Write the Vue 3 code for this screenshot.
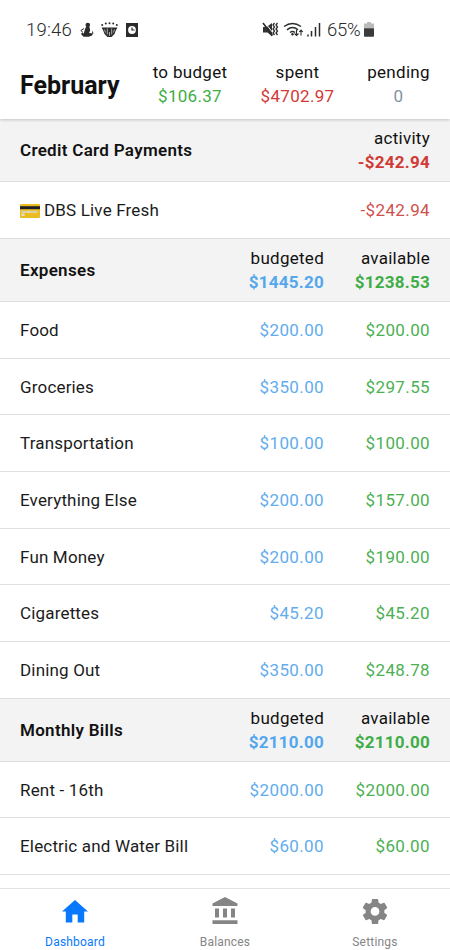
<script setup>
const totals = [
  { label: 'to budget', value: '$106.37', tone: 'green' },
  { label: 'spent', value: '$4702.97', tone: 'red' },
  { label: 'pending', value: '0', tone: 'slate' },
]
const sections = [
  {
    name: 'Credit Card Payments', available: '-$242.94', label: 'activity', tone: 'red',
    rows: [{ name: 'DBS Live Fresh', available: '-$242.94', card: true }],
  },
  {
    name: 'Expenses', budgeted: '$1445.20', available: '$1238.53', label: 'available', tone: 'green',
    rows: [
      { name: 'Food', budgeted: '$200.00', available: '$200.00' },
      { name: 'Groceries', budgeted: '$350.00', available: '$297.55' },
      { name: 'Transportation', budgeted: '$100.00', available: '$100.00' },
      { name: 'Everything Else', budgeted: '$200.00', available: '$157.00' },
      { name: 'Fun Money', budgeted: '$200.00', available: '$190.00' },
      { name: 'Cigarettes', budgeted: '$45.20', available: '$45.20' },
      { name: 'Dining Out', budgeted: '$350.00', available: '$248.78' },
    ],
  },
  {
    name: 'Monthly Bills', budgeted: '$2110.00', available: '$2110.00', label: 'available', tone: 'green',
    rows: [
      { name: 'Rent - 16th', budgeted: '$2000.00', available: '$2000.00' },
      { name: 'Electric and Water Bill', budgeted: '$60.00', available: '$60.00' },
    ],
  },
]
const tabs = [
  { name: 'Dashboard', active: true, box: '0 0 26 30', path: 'M13 4 26 15.5h-3.8V26.5h-6.5v-8h-5.4v8H3.8v-11H0z' },
  { name: 'Balances', box: '0 0 26 30', path: 'M13 1 25.5 7.5V10H.5V7.5zM3 12.5h4v9H3zM11 12.5h4v9h-4zM19 12.5h4v9h-4zM.5 24.3h25V28H.5z' },
  { name: 'Settings', box: '1.6 -.35 20.8 24', path: 'M19.43 12.98c.04-.32.07-.64.07-.98s-.03-.66-.07-.98l2.11-1.65c.19-.15.24-.42.12-.64l-2-3.46c-.12-.22-.39-.3-.61-.22l-2.49 1c-.52-.4-1.08-.73-1.69-.98l-.38-2.65A.49.49 0 0 0 14 2h-4c-.25 0-.46.18-.49.42l-.38 2.65c-.61.25-1.17.59-1.69.98l-2.49-1a.49.49 0 0 0-.61.22l-2 3.46c-.13.22-.07.49.12.64l2.11 1.65c-.04.32-.07.65-.07.98s.03.66.07.98l-2.11 1.65c-.19.15-.24.42-.12.64l2 3.46c.12.22.39.3.61.22l2.49-1c.52.4 1.08.73 1.69.98l.38 2.65c.03.24.24.42.49.42h4c.25 0 .46-.18.49-.42l.38-2.65c.61-.25 1.17-.59 1.69-.98l2.49 1c.23.09.49 0 .61-.22l2-3.46c.12-.22.07-.49-.12-.64zM12 15.5a3.5 3.5 0 1 1 0-7 3.5 3.5 0 0 1 0 7z' },
]
</script>

<template>
  <div class="screen">
    <div class="status">
      <span class="clock">19:46</span>
      <svg class="notices" viewBox="0 0 58 16" width="58" height="16">
        <g fill="#292b2c">
          <circle cx="7.8" cy="3" r="2.3" />
          <path d="M6 5h3.5l.7 3.5L9 11l3 .2v2L9 14.8H3.5L1 12l1-1.3 1.8.8L5 7z" />
          <path d="M4 6.5.8 8.5l2.2 2M11 13.5q3-1.5 1.5-4" fill="none" stroke="#292b2c" stroke-width="1" />
          <path d="M21.5 5.5h16L36 8l-1.5 4-3 3h-4l-3-3L23 8z" />
          <circle cx="22.2" cy="3" r="1" /><circle cx="25.8" cy="1.6" r="1" />
          <circle cx="29.5" cy="1.3" r="1" /><circle cx="33.2" cy="1.6" r="1" /><circle cx="36.8" cy="3" r="1" />
          <path d="M46 1h12v14H46z" />
        </g>
        <path d="M27.3 6.5v6M29.5 10v4M31.7 6.5v6M24.5 7.5l1 3M34.5 7.5l-1 3" stroke="#bbb" stroke-width=".9" />
        <circle cx="52" cy="8" r="3.9" fill="#fff" />
        <path d="M52 5.5V8h2.5" fill="none" stroke="#222" stroke-width="1.2" />
      </svg>
      <svg class="signals" viewBox="0 0 60 18" width="60" height="18">
        <path d="M1 6h3.5L10 2v13.5L5.5 11.5H1z" fill="#333" />
        <path d="m2.5 1 8.5 11" stroke="#fff" stroke-width="1" />
        <g fill="none" stroke="#292b2c">
          <path d="m1 2 9.5 12.5" stroke-width="1.6" />
          <path d="m12.5 2-1.5 2 1.5 2-1.5 2 1.5 2-1.5 2 1.5 2M15.5 2 14 4l1.5 2L14 8l1.5 2-1.5 2 1.5 2" stroke-width="1.3" />
          <path d="M22 5.5q8.5-6 17 0M25 8.8q5.5-4.4 11 0M28 11.5q2.5-1.8 5 0" stroke-width="1.5" />
          <path d="M34.5 9v5.5m-2-2 2 2 2-2M39 14.5V9m-1.8 2L39 9l1.8 2" stroke-width="1.1" />
          <path d="M46 13.5v2M49.5 10v5.5M53.5 6v9.5M57.5 2v13.5" stroke-width="1.5" />
        </g>
        <circle cx="30.5" cy="13.2" r="1.2" fill="#292b2c" />
      </svg>
      <span class="percent">65%</span>
      <svg class="battery" viewBox="0 0 10 15" width="10" height="15">
        <path d="M3 0h4v1.5h3v5H0v-5h3z" fill="#bbb" />
        <path d="M0 6.2h10V14q0 .8-.8.8H.8Q0 14.8 0 14z" fill="#3b3b3b" />
      </svg>
    </div>

    <header class="summary">
      <h1>February</h1>
      <div v-for="t in totals" :key="t.label" class="total">
        <span>{{ t.label }}</span>
        <span :class="t.tone">{{ t.value }}</span>
      </div>
    </header>

    <main>
      <section v-for="s in sections" :key="s.name">
        <div class="line heading">
          <h2>{{ s.name }}</h2>
          <div class="amount">
            <template v-if="s.budgeted"><span>budgeted</span><b class="blue">{{ s.budgeted }}</b></template>
          </div>
          <div class="amount">
            <span>{{ s.label }}</span><b :class="s.tone">{{ s.available }}</b>
          </div>
        </div>
        <div v-for="r in s.rows" :key="r.name" class="line row">
          <div class="name">
            <svg v-if="r.card" class="card" viewBox="0 0 20 14" width="20" height="14">
              <rect width="20" height="14" rx="1" fill="#e9bd21" />
              <path d="M0 2.2h20v3H0z" fill="#202124" />
              <path d="M1.5 6.8h16v2h-16z" fill="#e6dfbd" />
              <path d="M10 7.7h7M2 7.7h6" stroke="#a6a699" stroke-width=".5" stroke-dasharray="1 .5" />
              <path d="M1.5 9.5h3v2.5h-3z" fill="#dfdcca" />
            </svg>{{ r.name }}
          </div>
          <div class="amount blue">{{ r.budgeted }}</div>
          <div class="amount" :class="s.tone">{{ r.available }}</div>
        </div>
      </section>
    </main>

    <nav>
      <div v-for="t in tabs" :key="t.name" class="tab" :class="{ active: t.active }">
        <svg :viewBox="t.box" width="26" height="30"><path :d="t.path" fill="currentColor" fill-rule="evenodd" /></svg>
        <span>{{ t.name }}</span>
      </div>
    </nav>
  </div>
</template>

<style>
body { background: #fff; overflow: hidden; }
</style>

<style scoped>
.screen {
  width: 450px; height: 950px; box-sizing: border-box; display: flex; flex-direction: column;
  overflow: hidden; background: #fff; color: #111;
  font-family: Roboto, "Liberation Sans", sans-serif; font-size: 17px; letter-spacing: .2px;
}
.status { flex: 0 0 60px; display: flex; align-items: center; box-sizing: border-box; padding-left: 26px; font-size: 18.5px; color: #292b2c; font-weight: 300; }
.clock { width: 54px; letter-spacing: .2px; }
.signals { margin-left: 124px; }
.percent { margin-left: 5px; width: 37px; white-space: nowrap; letter-spacing: -.2px; }
.battery { margin: 0 0 1px; }
.summary {
  flex: 0 0 59px; position: relative; display: grid; grid-template-columns: 130px 120px 95px 107px;
  box-shadow: 0 1px 3px rgba(0, 0, 0, .2); clip-path: inset(0 0 -6px 0); z-index: 1; background: #fff;
}
h1 { margin: 0; padding: 10px 0 0 20px; font-size: 25px; line-height: 32px; font-weight: 700; letter-spacing: 0; }
.total { display: flex; flex-direction: column; align-items: center; padding-top: .4px; line-height: 24px; letter-spacing: .3px; }
.line { box-sizing: border-box; display: grid; grid-template-columns: 1fr 120px 106px; align-items: center; padding: 0 20px; border-bottom: 1px solid #dfdfdf; }
.heading { height: 63px; background: #f3f3f3; }
.row { height: 56.7px; letter-spacing: .17px; color: #1b1b1b; }
h2 { margin: 0; font-size: 17px; font-weight: 600; line-height: 24px; letter-spacing: .3px; white-space: nowrap; }
.amount { text-align: right; line-height: 24px; white-space: nowrap; }
.row .amount { letter-spacing: .38px; }
.heading .amount { display: flex; flex-direction: column; letter-spacing: .27px; }
.name { line-height: 24px; white-space: nowrap; }
.card { margin-right: 4px; vertical-align: -2px; }
.blue { color: #55a7ed; }
.green { color: #3fad47; }
.red { color: #d13a36; }
.row .blue { color: #62aced; }
.row .green { color: #4cb053; }
.row .red { color: #cf514d; }
.slate { color: #8492a0; }
main { flex: 1; min-height: 0; overflow: hidden; padding-top: .3px; background: #fff; }
nav { flex: 0 0 62px; box-sizing: border-box; border-top: 1px solid #e2e2e2; display: grid; grid-template-columns: repeat(3, 1fr); background: #fff; }
.tab { display: flex; flex-direction: column; align-items: center; color: #858585; padding-top: 7px; font-size: 12px; line-height: 16px; }
.tab span { margin-top: 8px; }
.active { color: #0879ff; }
</style>
